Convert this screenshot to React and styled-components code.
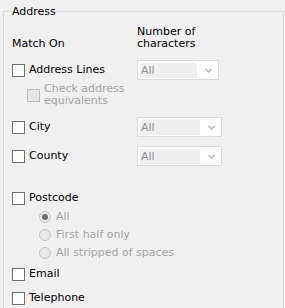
import styled, { createGlobalStyle } from "styled-components";

const GlobalStyle = createGlobalStyle`
  html, body {
    margin: 0;
    padding: 0;
    background: #f0f0f0;
    overflow: hidden;
  }
  body {
    font-family: "DejaVu Sans", "Liberation Sans", sans-serif;
    font-size: 11px;
    color: #000;
  }
`;

const Group = styled.fieldset`
  margin: 5px 1px 0 3px;
  padding: 0 0 14px 8px;
  border: 1px solid #dcdcdc;
  min-width: 0;
`;

const Legend = styled.legend`
  padding: 0 1px;
  margin-left: -1px;
  line-height: 13px;
  font-size: 11px;
`;

const Body = styled.div`
  padding-top: 8px;
  display: flex;
  flex-direction: column;
`;

const Header = styled.div`
  display: flex;
  align-items: flex-end;
  line-height: 12px;
`;

const LeftCell = styled.div`
  width: 125px;
  flex: none;
  display: flex;
  align-items: center;
  padding-left: ${(p) => p.$indent || 0}px;
  box-sizing: border-box;
`;

const Row = styled.div`
  display: flex;
  align-items: center;
  height: ${(p) => p.$h}px;
  margin-top: ${(p) => p.$mt || 0}px;
`;

const Box = styled.span`
  width: 13px;
  height: 13px;
  box-sizing: border-box;
  flex: none;
  border: 1px solid ${(p) => (p.$disabled ? "#bcbcbc" : "#707070")};
  background: ${(p) => (p.$disabled ? "#e6e6e6" : "#fff")};
`;

const Label = styled.span`
  margin-left: ${(p) => p.$gap || 4}px;
  color: ${(p) => (p.$disabled ? "#a3a3a3" : "#000")};
  line-height: 12px;
  white-space: nowrap;
`;

const Radio = styled.span`
  width: 12px;
  height: 12px;
  box-sizing: border-box;
  flex: none;
  border-radius: 50%;
  border: 1px solid #c4c4c4;
  background: #e8e8e8;
  display: flex;
  align-items: center;
  justify-content: center;
  &::after {
    content: "";
    display: ${(p) => (p.$checked ? "block" : "none")};
    width: 6px;
    height: 6px;
    border-radius: 50%;
    background: #6f6f6f;
  }
`;

const Select = styled.div`
  width: ${(p) => p.$w}px;
  height: 20px;
  box-sizing: border-box;
  border: 1px solid #dadada;
  background: #fff;
  display: flex;
  align-items: center;
  padding: 0 0 0 2px;
`;

const SelectValue = styled.div`
  flex: 1;
  height: 15px;
  line-height: 15px;
  background: #efefef;
  color: #8f8f8f;
  padding-left: 1px;
`;

const Arrow = styled.svg`
  width: 21px;
  flex: none;
  height: 16px;
`;

const Chevron = () => (
  <Arrow viewBox="0 0 21 16">
    <path d="M8.5 7 L11.5 10 L14.5 7" fill="none" stroke="#b9b9b9" strokeWidth="1.4" />
  </Arrow>
);

const Dropdown = ({ w }) => (
  <Select $w={w}>
    <SelectValue>All</SelectValue>
    <Chevron />
  </Select>
);

const CheckRow = ({ label, h = 20, mt, select }) => (
  <Row $h={h} $mt={mt}>
    <LeftCell>
      <Box />
      <Label>{label}</Label>
    </LeftCell>
    {select && <Dropdown w={select} />}
  </Row>
);

const RadioRow = ({ label, checked }) => (
  <Row $h={18}>
    <LeftCell $indent={27}>
      <Radio $checked={checked} />
      <Label $disabled $gap={5}>{label}</Label>
    </LeftCell>
  </Row>
);

export default function App() {
  return (
    <>
      <GlobalStyle />
      <Group>
        <Legend>Address</Legend>
        <Body>
          <Header>
            <LeftCell>Match On</LeftCell>
            <div>
              Number of
              <br />
              characters
            </div>
          </Header>
          <CheckRow label="Address Lines" mt={10} select={82} />
          <Row $h={24} $mt={3}>
            <LeftCell $indent={15}>
              <Box $disabled />
              <Label $disabled>
                Check address
                <br />
                equivalents
              </Label>
            </LeftCell>
          </Row>
          <CheckRow label="City" mt={10} select={85} />
          <CheckRow label="County" mt={9} select={85} />
          <CheckRow label="Postcode" mt={22} />
          <RadioRow label="All" checked />
          <RadioRow label="First half only" />
          <RadioRow label="All stripped of spaces" />
          <CheckRow label="Email" mt={2} />
          <CheckRow label="Telephone" mt={4} />
        </Body>
      </Group>
    </>
  );
}
